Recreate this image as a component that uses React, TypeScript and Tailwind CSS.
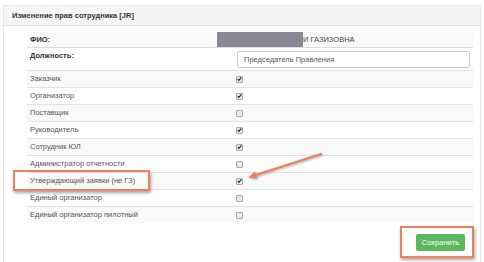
import React from 'react';

const roles: { name: string; checked: boolean }[] = [
  { name: 'Заказчик', checked: true },
  { name: 'Организатор', checked: true },
  { name: 'Поставщик', checked: false },
  { name: 'Руководитель', checked: true },
  { name: 'Сотрудник ЮЛ', checked: true },
  { name: 'Администратор отчетности', checked: false },
  { name: 'Утверждающий заявки (не ГЗ)', checked: true },
  { name: 'Единый организатор', checked: false },
  { name: 'Единый организатор пилотный', checked: false },
];

function Check({ on }: { on: boolean }) {
  return (
    <span className="flex h-[7px] w-[7px] items-center justify-center rounded-[1px] border border-[#a9a9a9] bg-[#e9e9e9]">
      {on && (
        <svg width="6" height="6" viewBox="0 0 6 6">
          <path d="M0.8 3.2 L2.3 4.7 L5.3 1" fill="none" stroke="#222" strokeWidth="1.3" />
        </svg>
      )}
    </span>
  );
}

export default function App() {
  return (
    <div className="relative h-[262px] w-[484px] overflow-hidden bg-white pt-[5px] text-[#333]" style={{ fontFamily: '"Liberation Sans", Arial, sans-serif' }}>
      <div className="mx-[3px] h-[260px] border border-[#e6e6e6]">
        {/* panel header */}
        <div className="flex h-[20px] items-center border-b border-[#e3e3e3] bg-[#f5f5f5] pl-[8px] text-[7.5px] font-bold text-[#333]">
          Изменение прав сотрудника [JR]
        </div>

        <div className="pl-[23px] pr-[7px] pt-[6px]">
          <div className="text-[7.5px]">
            {/* ФИО */}
            <div className="relative flex h-[15px] items-center bg-[#f9f9f9]">
              <div className="w-[206px] pl-[3px] font-bold">ФИО:</div>
              <div className="pl-[70px] text-[#444]">И ГАЗИЗОВНА</div>
              <div className="absolute left-[190px] top-0 h-[15px] w-[86px] bg-[#8a8797]" />
            </div>
            {/* Должность */}
            <div className="flex h-[23px] border-t border-[#ddd]">
              <div className="w-[210px] pl-[3px] pt-[2px] font-bold">Должность:</div>
              <div className="flex-1 pr-[3px] pt-[3px]">
                <div className="flex h-[17px] items-center rounded-[2px] border border-[#ccc] pl-[6px] text-[#555]">
                  Председатель Правления
                </div>
              </div>
            </div>
            {roles.map((r, i) => (
              <div
                key={r.name}
                className={`flex h-[17px] items-center border-t border-[#e2e2e2] ${i % 2 === 0 ? 'bg-[#f9f9f9]' : 'bg-white'}`}
              >
                <div className="w-[209px] pl-[3px] text-[#555]">{r.name}</div>
                <Check on={r.checked} />
              </div>
            ))}
          </div>

          <div className="flex justify-end pr-[8px] pt-[11px]">
            <button className="h-[17px] w-[49px] rounded-[2px] bg-[#5cb85c] text-[7.5px] text-white">Сохранить</button>
          </div>
        </div>
      </div>

      {/* annotations */}
      <div className="absolute left-[13px] top-[170px] h-[21px] w-[137px] border-2 border-[#ee7f59] shadow-[1px_2px_3px_rgba(0,0,0,0.35)]" />
      <div className="absolute left-[400px] top-[226px] h-[32px] w-[74px] border-2 border-[#ee7f59] shadow-[1px_2px_3px_rgba(0,0,0,0.35)]" />
      <svg className="absolute left-0 top-0" width="484" height="262" viewBox="0 0 484 262" style={{ filter: 'drop-shadow(1px 1.5px 1px rgba(0,0,0,0.35))' }}>
        <line x1="321" y1="154" x2="254" y2="175.5" stroke="#ee7f59" strokeWidth="2" strokeLinecap="round" />
        <path d="M248 177.5 L255 171.5 L257 178.5 Z" fill="#ee7f59" />
      </svg>
    </div>
  );
}
